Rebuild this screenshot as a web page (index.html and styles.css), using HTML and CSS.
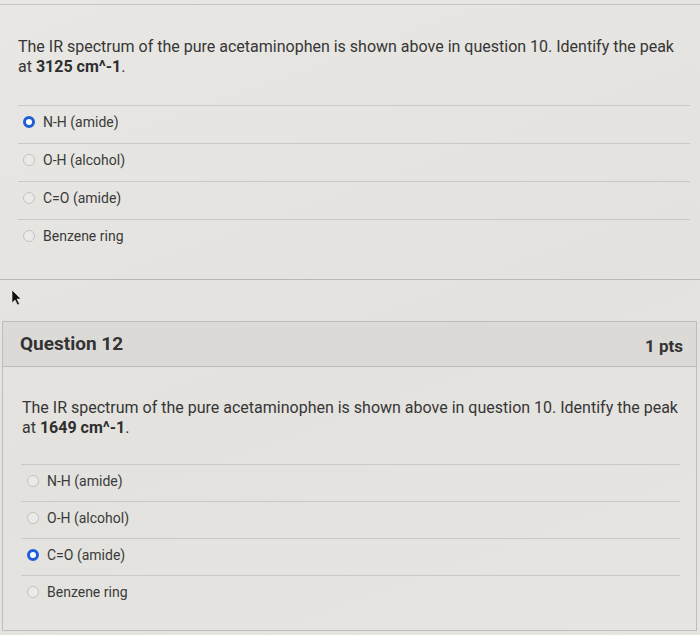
FILE: index.html
```html
<!DOCTYPE html>
<html>
<head>
<meta charset="utf-8">
<link rel="stylesheet" href="styles.css">
</head>
<body>
<div class="page">
  <section class="card card-prev">
    <p class="q-text">The IR spectrum of the pure acetaminophen is shown above in question 10. Identify the peak <span>at</span> <strong>3125&nbsp;cm^-1</strong>.</p>
    <ul class="answers">
      <li class="answer"><span class="radio checked"></span><span>N-H (amide)</span></li>
      <li class="answer"><span class="radio"></span><span>O-H (alcohol)</span></li>
      <li class="answer"><span class="radio"></span><span>C=O (amide)</span></li>
      <li class="answer"><span class="radio"></span><span>Benzene ring</span></li>
    </ul>
  </section>

  <div class="spacer">
    <svg class="cursor" width="11" height="17" viewBox="0 0 11 17"><path d="M1 1 L1 14 L4 11 L6.5 16 L8.5 15 L6 10 L10 10 Z" fill="#111" stroke="#eee" stroke-width="0.6"/></svg>
  </div>

  <section class="card card-q">
    <header class="q-header">
      <h2 class="q-name">Question 12</h2>
      <span class="q-pts">1 pts</span>
    </header>
    <div class="q-body">
      <p class="q-text">The IR spectrum of the pure acetaminophen is shown above in question 10. Identify the peak <span>at</span> <strong>1649&nbsp;cm^-1</strong>.</p>
      <ul class="answers">
        <li class="answer"><span class="radio"></span><span>N-H (amide)</span></li>
        <li class="answer"><span class="radio"></span><span>O-H (alcohol)</span></li>
        <li class="answer"><span class="radio checked"></span><span>C=O (amide)</span></li>
        <li class="answer"><span class="radio"></span><span>Benzene ring</span></li>
      </ul>
    </div>
  </section>
</div>
</body>
</html>
```

FILE: styles.css
```css
* { box-sizing: border-box; }
html, body {
  margin: 0;
  padding: 0;
  background: #e4e3df;
}
body {
  font-family: Roboto, "Liberation Sans", sans-serif;
  color: #363636;
  font-size: 16px;
  line-height: 20px;
}
.page {
  width: 700px;
  height: 635px;
  padding-top: 4px;
  overflow: hidden;
  background: linear-gradient(160deg, #e8e7e4 0%, #e3e2de 55%, #e6e5e2 100%);
}
ul { list-style: none; margin: 0; padding: 0; }
p { margin: 0; }
strong { font-weight: 700; color: #2e2e2e; }

.card-prev {
  border-top: 1px solid #c6c5c1;
  border-bottom: 1px solid #b9b8b4;
  padding: 32px 10px 22px 18px;
}
.card-prev .q-text {
  width: 662px;
}
.card-prev .answers {
  margin-top: 28px;
}
.card-prev .radio { margin-left: 5px; }

.answer {
  display: flex;
  align-items: center;
  gap: 8px;
  border-top: 1px solid #cac9c5;
  padding: 6px 0 11px;
  font-size: 14px;
  color: #3a3a3a;
}

.radio {
  width: 12px;
  height: 12px;
  border-radius: 50%;
  border: 1.5px solid #c3c2be;
  background: #ebeae7;
  flex: none;
}
.radio.checked {
  border: 3.5px solid #1d5ed8;
  background: #fff;
}

.spacer {
  position: relative;
  height: 41px;
}
.cursor {
  position: absolute;
  left: 11px;
  top: 9px;
}

.card-q {
  margin: 0 3px 0 2px;
  border: 1px solid #bebdb9;
  height: 310px;
}
.q-header {
  display: flex;
  align-items: center;
  justify-content: space-between;
  height: 45px;
  padding: 0 13px 0 17px;
  background: #dbdad6;
  border-bottom: 1px solid #bdbcb8;
}
.q-name {
  margin: 0;
  font-size: 19px;
  font-weight: 700;
  color: #333;
}
.q-pts {
  font-size: 17px;
  font-weight: 700;
  color: #333;
  margin-top: 4px;
}
.q-body {
  padding: 31px 14px 18px 18px;
}
.q-body .q-text {
  width: 662px;
  padding-left: 1px;
}
.q-body .answers {
  margin-top: 26px;
  margin-right: 2px;
}
.q-body .answer {
  padding: 6px 0 10px;
}
.q-body .radio { margin-left: 6px; }
```
